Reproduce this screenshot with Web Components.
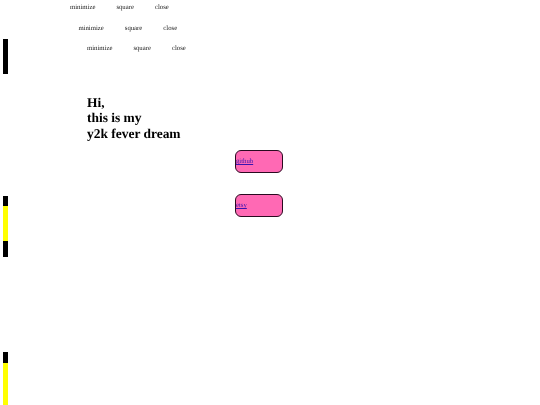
<!DOCTYPE html>
<html>
<head>
<meta charset="utf-8">
<title>y2k fever dream</title>
<style>
  html, body { margin: 0; height: 405px; overflow: hidden; background: #fff; }
  body { font-family: "Liberation Serif", serif; font-size: 6.72px; color: #222; text-rendering: geometricPrecision; }
</style>
</head>
<body>
<dream-page>
  <stripe-rail slot="rail"></stripe-rail>
  <window-controls style="--indent: 70px; --top: 3.6px"></window-controls>
  <window-controls style="--indent: 78.4px; --top: 13px"></window-controls>
  <window-controls style="--indent: 87px; --top: 12.4px"></window-controls>
  <dream-title>Hi,<br>this is my<br>y2k fever dream</dream-title>
  <link-button href="#github" style="--top: 9px">github</link-button>
  <link-button href="#etsy" style="--top: 21px">etsy</link-button>
</dream-page>

<script>
  customElements.define('dream-page', class extends HTMLElement {
    constructor () {
      super()
      this.attachShadow({ mode: 'open' }).innerHTML = `
        <style>
          /* the reference is a downscaled capture, everything is slightly soft */
          :host { display: flex; height: 405px; overflow: hidden; background: #fff; filter: blur(0.7px); }
          #rail { flex: none; width: 5px; margin-left: 3px; }
          #main { flex: 1; display: flex; flex-direction: column; margin-left: -8px; }
        </style>
        <div id="rail"><slot name="rail"></slot></div>
        <div id="main"><slot></slot></div>
      `
    }
  })

  customElements.define('stripe-rail', class extends HTMLElement {
    constructor () {
      super()
      this.attachShadow({ mode: 'open' }).innerHTML = `
        <style>
          :host { display: flex; flex-direction: column; width: 5px; }
          div { flex: none; }
          .black { background: #000; }
          .yellow { background: #ff0; }
        </style>
        <div style="height: 39px"></div>
        <div class="black" style="height: 35px"></div>
        <div style="height: 122px"></div>
        <div class="black" style="height: 10px"></div>
        <div class="yellow" style="height: 35px"></div>
        <div class="black" style="height: 16px"></div>
        <div style="height: 95px"></div>
        <div class="black" style="height: 11px"></div>
        <div class="yellow" style="height: 42px"></div>
      `
    }
  })

  customElements.define('window-controls', class extends HTMLElement {
    constructor () {
      super()
      this.attachShadow({ mode: 'open' }).innerHTML = `
        <style>
          :host {
            display: flex;
            gap: 21px;
            height: 8px;
            line-height: 8px;
            margin-top: var(--top);
            padding-left: var(--indent);
          }
        </style>
        <span>minimize</span><span>square</span><span>close</span>
      `
    }
  })

  customElements.define('dream-title', class extends HTMLElement {
    constructor () {
      super()
      this.attachShadow({ mode: 'open' }).innerHTML = `
        <style>
          :host {
            display: block;
            margin: 42px 0 0 87px;
            color: #000;
            font-size: 13.44px;
            font-weight: bold;
            line-height: 15.5px;
          }
        </style>
        <slot></slot>
      `
    }
  })

  customElements.define('link-button', class extends HTMLElement {
    constructor () {
      super()
      this.attachShadow({ mode: 'open' }).innerHTML = `
        <style>
          :host {
            display: flex;
            align-items: center;
            box-sizing: border-box;
            width: 48px;
            height: 23px;
            margin: var(--top) 0 0 235px;
            background: #ff69b4;
            border: 1px solid #2a0a20;
            border-radius: 6px;
          }
          a { color: #3a14b0; }
        </style>
        <a href="${this.getAttribute('href')}"><slot></slot></a>
      `
    }
  })
</script>
</body>
</html>
